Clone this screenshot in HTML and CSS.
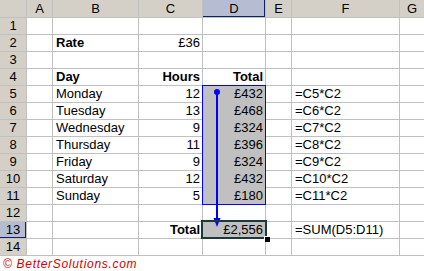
FILE: index.html
```html
<!DOCTYPE html>
<html>
<head>
<meta charset="utf-8">
<link rel="stylesheet" href="styles.css">
</head>
<body>
<div class="sheet">
  <div class="grid">
    <div class="hd corner"></div>
    <div class="hd col">A</div><div class="hd col">B</div><div class="hd col">C</div><div class="hd col sel-col">D</div><div class="hd col">E</div><div class="hd col">F</div><div class="hd col">G</div>

    <div class="hd row">1</div><div class="c"></div><div class="c"></div><div class="c"></div><div class="c"></div><div class="c"></div><div class="c"></div><div class="c"></div>

    <div class="hd row">2</div><div class="c"></div><div class="c b">Rate</div><div class="c r">£36</div><div class="c"></div><div class="c"></div><div class="c"></div><div class="c"></div>

    <div class="hd row">3</div><div class="c"></div><div class="c"></div><div class="c"></div><div class="c"></div><div class="c"></div><div class="c"></div><div class="c"></div>

    <div class="hd row">4</div><div class="c"></div><div class="c b">Day</div><div class="c r b">Hours</div><div class="c r b">Total</div><div class="c"></div><div class="c"></div><div class="c"></div>

    <div class="hd row">5</div><div class="c"></div><div class="c">Monday</div><div class="c r">12</div><div class="c r g">£432</div><div class="c"></div><div class="c">=C5*C2</div><div class="c"></div>

    <div class="hd row">6</div><div class="c"></div><div class="c">Tuesday</div><div class="c r">13</div><div class="c r g">£468</div><div class="c"></div><div class="c">=C6*C2</div><div class="c"></div>

    <div class="hd row">7</div><div class="c"></div><div class="c">Wednesday</div><div class="c r">9</div><div class="c r g">£324</div><div class="c"></div><div class="c">=C7*C2</div><div class="c"></div>

    <div class="hd row">8</div><div class="c"></div><div class="c">Thursday</div><div class="c r">11</div><div class="c r g">£396</div><div class="c"></div><div class="c">=C8*C2</div><div class="c"></div>

    <div class="hd row">9</div><div class="c"></div><div class="c">Friday</div><div class="c r">9</div><div class="c r g">£324</div><div class="c"></div><div class="c">=C9*C2</div><div class="c"></div>

    <div class="hd row">10</div><div class="c"></div><div class="c">Saturday</div><div class="c r">12</div><div class="c r g">£432</div><div class="c"></div><div class="c">=C10*C2</div><div class="c"></div>

    <div class="hd row">11</div><div class="c"></div><div class="c">Sunday</div><div class="c r">5</div><div class="c r g">£180</div><div class="c"></div><div class="c">=C11*C2</div><div class="c"></div>

    <div class="hd row">12</div><div class="c"></div><div class="c"></div><div class="c"></div><div class="c"></div><div class="c"></div><div class="c"></div><div class="c"></div>

    <div class="hd row sel-row">13</div><div class="c"></div><div class="c"></div><div class="c r b">Total</div><div class="c r g">£2,556</div><div class="c"></div><div class="c">=SUM(D5:D11)</div><div class="c"></div>

    <div class="hd row">14</div><div class="c"></div><div class="c"></div><div class="c"></div><div class="c"></div><div class="c"></div><div class="c"></div><div class="c"></div>
  </div>

  <div class="range"></div>
  <svg class="arrow" width="12" height="145" viewBox="0 0 12 145">
    <circle cx="6" cy="7" r="3" fill="#0000ff"/>
    <line x1="6" y1="7" x2="6" y2="136" stroke="#0000ff" stroke-width="2"/>
    <polygon points="2.5,133 9.5,133 6,142" fill="#0000ff"/>
  </svg>
  <div class="active"><span class="handle"></span></div>
</div>
<div class="footer">© BetterSolutions.com</div>
</body>
</html>
```

FILE: styles.css
```css
html, body {
  margin: 0;
  padding: 0;
  background: #ffffff;
}

.sheet {
  position: relative;
  width: 424px;
  height: 256px;
  overflow: hidden;
}

.grid {
  display: grid;
  grid-template-columns: 26px 25px 85px 63px 62px 25px 107px 24px;
  grid-template-rows: 17px repeat(14, 16px);
  gap: 1px;
  background: #c0c0c0;
  border-bottom: 1px solid #c0c0c0;
  width: 424px;
  font-family: "Liberation Sans", Arial, sans-serif;
  font-size: 13px;
  color: #000;
}

.hd {
  background: #d4d0c8;
  display: flex;
  align-items: center;
  justify-content: center;
  line-height: 16px;
}

.col {
  padding-top: 1px;
}

.sel-col {
  background: #b6bdd2;
  box-shadow: inset 0 -1px 0 #0a246a, inset -1px 0 0 #0a246a;
}

.sel-row {
  background: #b6bdd2;
  box-shadow: inset -1px 0 0 #0a246a, inset 0 -1px 0 #0a246a;
}

.c {
  background: #ffffff;
  line-height: 16px;
  padding: 0 2px 0 3px;
  white-space: nowrap;
  overflow: visible;
}

.r {
  text-align: right;
}

.b {
  font-weight: bold;
}

.g {
  background: #c0c0c0;
}

.range {
  position: absolute;
  left: 202px;
  top: 85px;
  width: 62px;
  height: 118px;
  border: 1px solid #0000ff;
}

.arrow {
  position: absolute;
  left: 211px;
  top: 85px;
}

.active {
  position: absolute;
  left: 201px;
  top: 220px;
  width: 62px;
  height: 15px;
  border: 2px solid #1c3a3a;
}

.handle {
  position: absolute;
  right: -5px;
  bottom: -5px;
  width: 5px;
  height: 5px;
  background: #000;
  border: 1px solid #fff;
  border-width: 1px 0 0 1px;
}

.footer {
  font-family: "Liberation Sans", Arial, sans-serif;
  font-style: italic;
  font-size: 12px;
  letter-spacing: 0.7px;
  color: #d40000;
  padding: 2px 0 0 3px;
  line-height: 13px;
}
```
